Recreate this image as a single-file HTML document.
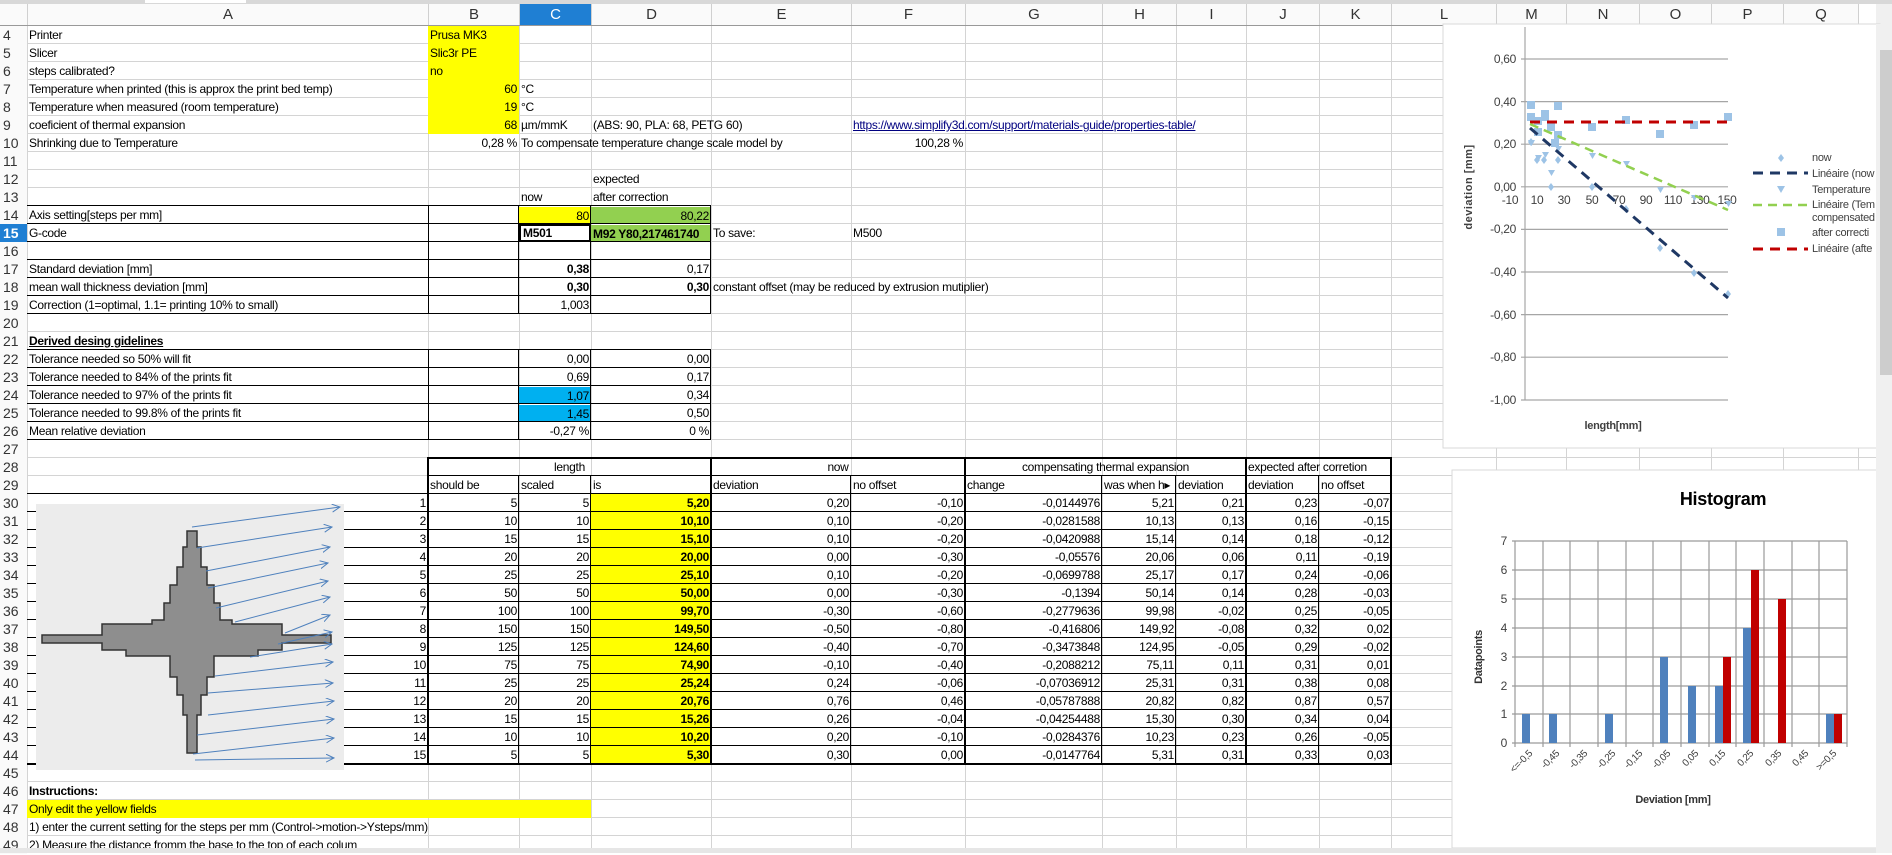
<!DOCTYPE html>
<html><head><meta charset="utf-8"><style>
*{margin:0;padding:0}
body{width:1892px;height:853px;overflow:hidden;background:#fff;position:relative;font-family:"Liberation Sans",Arial,sans-serif;font-size:12px;color:#000;letter-spacing:-0.3px}
#grid{position:absolute;left:27px;top:25px;width:1849px;height:823px;background:repeating-linear-gradient(to bottom,#d4d4d4 0 1px,transparent 1px 18px)}
.v{position:absolute;top:4px;width:1px;height:844px;background:#d4d4d4}
.c{position:absolute;height:18px;line-height:19px;white-space:nowrap;padding:0 2px;box-sizing:border-box}
.r{text-align:right}.ce{text-align:center}.b{font-weight:bold}
.A{left:27px;width:401px}.B{left:428px;width:91px}.C{left:519px;width:72px}.D{left:591px;width:120px}.E{left:711px;width:140px}.F{left:851px;width:114px}.G{left:965px;width:137px}.H{left:1102px;width:74px}.I{left:1176px;width:70px}.J{left:1246px;width:73px}.K{left:1319px;width:72px}
.y{background:#ffff00}.g{background:#92d050}.bl{background:#00b0f0}
.hl{position:absolute;height:1px;background:#000}
.vl{position:absolute;width:1px;background:#000}
.rn{position:absolute;left:0;width:27px;height:18px;line-height:19px;font-size:14px;color:#333;padding-left:3px;box-sizing:border-box;background:#fafafa;letter-spacing:0}
.ch{position:absolute;top:4px;height:21px;line-height:22px;text-align:center;font-size:15px;color:#333;background:#fafafa;border-right:1px solid #d0d0d0;box-sizing:border-box;letter-spacing:0}
</style></head><body>
<div style="position:absolute;left:0;top:0;width:1892px;height:4px;background:#d8d8d8"></div>
<div style="position:absolute;left:145px;top:0;width:101px;height:3px;background:#fff"></div>
<div id="grid"></div>
<div class="v" style="left:27px"></div><div class="v" style="left:428px"></div><div class="v" style="left:519px"></div><div class="v" style="left:591px"></div><div class="v" style="left:711px"></div><div class="v" style="left:851px"></div><div class="v" style="left:965px"></div><div class="v" style="left:1102px"></div><div class="v" style="left:1176px"></div><div class="v" style="left:1246px"></div><div class="v" style="left:1319px"></div><div class="v" style="left:1391px"></div><div class="v" style="left:1496px"></div><div class="v" style="left:1566px"></div><div class="v" style="left:1639px"></div><div class="v" style="left:1711px"></div><div class="v" style="left:1783px"></div><div class="v" style="left:1858px"></div>
<div class="ch" style="left:0;width:28px"></div>
<div class="ch" style="left:28px;width:401px">A</div><div class="ch" style="left:429px;width:91px">B</div><div class="ch" style="left:520px;width:72px;background:#1f7fd3;color:#fff">C</div><div class="ch" style="left:592px;width:120px">D</div><div class="ch" style="left:712px;width:140px">E</div><div class="ch" style="left:852px;width:114px">F</div><div class="ch" style="left:966px;width:137px">G</div><div class="ch" style="left:1103px;width:74px">H</div><div class="ch" style="left:1177px;width:70px">I</div><div class="ch" style="left:1247px;width:73px">J</div><div class="ch" style="left:1320px;width:72px">K</div><div class="ch" style="left:1392px;width:105px">L</div><div class="ch" style="left:1497px;width:70px">M</div><div class="ch" style="left:1567px;width:73px">N</div><div class="ch" style="left:1640px;width:72px">O</div><div class="ch" style="left:1712px;width:72px">P</div><div class="ch" style="left:1784px;width:75px">Q</div>
<div style="position:absolute;left:0;top:25px;width:1876px;height:1px;background:#999"></div>
<div class="rn" style="top:26px">4</div><div class="rn" style="top:44px">5</div><div class="rn" style="top:62px">6</div><div class="rn" style="top:80px">7</div><div class="rn" style="top:98px">8</div><div class="rn" style="top:116px">9</div><div class="rn" style="top:134px">10</div><div class="rn" style="top:152px">11</div><div class="rn" style="top:170px">12</div><div class="rn" style="top:188px">13</div><div class="rn" style="top:206px">14</div><div class="rn" style="top:224px;background:#1f7fd3;color:#fff;font-weight:bold">15</div><div class="rn" style="top:242px">16</div><div class="rn" style="top:260px">17</div><div class="rn" style="top:278px">18</div><div class="rn" style="top:296px">19</div><div class="rn" style="top:314px">20</div><div class="rn" style="top:332px">21</div><div class="rn" style="top:350px">22</div><div class="rn" style="top:368px">23</div><div class="rn" style="top:386px">24</div><div class="rn" style="top:404px">25</div><div class="rn" style="top:422px">26</div><div class="rn" style="top:440px">27</div><div class="rn" style="top:458px">28</div><div class="rn" style="top:476px">29</div><div class="rn" style="top:494px">30</div><div class="rn" style="top:512px">31</div><div class="rn" style="top:530px">32</div><div class="rn" style="top:548px">33</div><div class="rn" style="top:566px">34</div><div class="rn" style="top:584px">35</div><div class="rn" style="top:602px">36</div><div class="rn" style="top:620px">37</div><div class="rn" style="top:638px">38</div><div class="rn" style="top:656px">39</div><div class="rn" style="top:674px">40</div><div class="rn" style="top:692px">41</div><div class="rn" style="top:710px">42</div><div class="rn" style="top:728px">43</div><div class="rn" style="top:746px">44</div><div class="rn" style="top:764px">45</div><div class="rn" style="top:782px">46</div><div class="rn" style="top:800px">47</div><div class="rn" style="top:818px">48</div><div class="rn" style="top:836px">49</div>

<div class="c A" style="top:26px">Printer</div><div class="c B y" style="top:26px">Prusa MK3</div>
<div class="c A" style="top:44px">Slicer</div><div class="c B y" style="top:44px">Slic3r PE</div>
<div class="c A" style="top:62px">steps calibrated?</div><div class="c B y" style="top:62px">no</div>
<div class="c A" style="top:80px">Temperature when printed (this is approx the print bed temp)</div><div class="c B y r" style="top:80px">60</div><div class="c C" style="top:80px">°C</div>
<div class="c A" style="top:98px">Temperature when measured (room temperature)</div><div class="c B y r" style="top:98px">19</div><div class="c C" style="top:98px">°C</div>
<div class="c A" style="top:116px">coeficient of thermal expansion</div><div class="c B y r" style="top:116px">68</div><div class="c C" style="top:116px">µm/mmK</div><div class="c D" style="top:116px">(ABS: 90, PLA: 68, PETG 60)</div><div class="c F" style="top:116px;text-decoration:underline;color:#000080">https://www.simplify3d.com/support/materials-guide/properties-table/</div>
<div class="c A" style="top:134px">Shrinking due to Temperature</div><div class="c B r" style="top:134px">0,28 %</div><div class="c C" style="top:134px">To compensate temperature change scale model by</div><div class="c F r" style="top:134px">100,28 %</div>
<div class="c D" style="top:170px">expected</div>
<div class="c C" style="top:188px">now</div><div class="c D" style="top:188px">after correction</div>
<div class="c A" style="top:206px">Axis setting[steps per mm]</div><div class="c C y r" style="top:207px;height:17px">80</div><div class="c D g r" style="top:207px;height:17px">80,22</div>
<div class="c A" style="top:224px">G-code</div><div class="c C b" style="top:224px;border:2px solid #000;line-height:15px">M501</div><div class="c D g b" style="top:225px;height:17px">M92 Y80,217461740</div><div class="c E" style="top:224px">To save:</div><div class="c F" style="top:224px">M500</div>
<div class="c A" style="top:260px">Standard deviation [mm]</div><div class="c C r b" style="top:260px">0,38</div><div class="c D r" style="top:260px">0,17</div>
<div class="c A" style="top:278px">mean wall thickness deviation [mm]</div><div class="c C r b" style="top:278px">0,30</div><div class="c D r b" style="top:278px">0,30</div><div class="c E" style="top:278px">constant offset (may be reduced by extrusion mutiplier)</div>
<div class="c A" style="top:296px">Correction (1=optimal, 1.1= printing 10% to small)</div><div class="c C r" style="top:296px">1,003</div>
<div class="c A b" style="top:332px;text-decoration:underline">Derived desing gidelines</div>
<div class="c A" style="top:350px">Tolerance needed so 50% will fit</div><div class="c C r" style="top:350px">0,00</div><div class="c D r" style="top:350px">0,00</div>
<div class="c A" style="top:368px">Tolerance needed to 84% of the prints fit</div><div class="c C r" style="top:368px">0,69</div><div class="c D r" style="top:368px">0,17</div>
<div class="c A" style="top:386px">Tolerance needed to 97% of the prints fit</div><div class="c C r bl" style="top:387px;height:17px">1,07</div><div class="c D r" style="top:386px">0,34</div>
<div class="c A" style="top:404px">Tolerance needed to 99.8% of the prints fit</div><div class="c C r bl" style="top:405px;height:17px">1,45</div><div class="c D r" style="top:404px">0,50</div>
<div class="c A" style="top:422px">Mean relative deviation</div><div class="c C r" style="top:422px">-0,27 %</div><div class="c D r" style="top:422px">0 %</div>

<div class="hl" style="left:27px;width:684px;top:205px"></div><div class="hl" style="left:27px;width:684px;top:223px"></div><div class="hl" style="left:27px;width:684px;top:241px"></div><div class="hl" style="left:27px;width:684px;top:259px"></div><div class="hl" style="left:27px;width:684px;top:277px"></div><div class="hl" style="left:27px;width:684px;top:295px"></div><div class="hl" style="left:27px;width:684px;top:313px"></div>
<div class="vl" style="left:428px;top:205px;height:109px"></div><div class="vl" style="left:518px;top:205px;height:109px"></div><div class="vl" style="left:590px;top:205px;height:109px"></div><div class="vl" style="left:710px;top:205px;height:109px"></div>
<div class="hl" style="left:27px;width:684px;top:349px"></div><div class="hl" style="left:27px;width:684px;top:367px"></div><div class="hl" style="left:27px;width:684px;top:385px"></div><div class="hl" style="left:27px;width:684px;top:403px"></div><div class="hl" style="left:27px;width:684px;top:421px"></div><div class="hl" style="left:27px;width:684px;top:439px"></div>
<div class="vl" style="left:428px;top:349px;height:91px"></div><div class="vl" style="left:518px;top:349px;height:91px"></div><div class="vl" style="left:590px;top:349px;height:91px"></div><div class="vl" style="left:710px;top:349px;height:91px"></div>

<div class="c D y" style="top:494px;height:270px;padding:0"></div>
<div class="c ce" style="left:428px;width:283px;top:458px">length</div><div class="c ce" style="left:711px;width:254px;top:458px">now</div><div class="c ce" style="left:965px;width:281px;top:458px">compensating thermal expansion</div><div class="c" style="left:1246px;width:145px;top:458px">expected after corretion</div>
<div class="c B" style="top:476px">should be</div><div class="c C" style="top:476px">scaled</div><div class="c D" style="top:476px">is</div><div class="c E" style="top:476px">deviation</div><div class="c F" style="top:476px">no offset</div><div class="c G" style="top:476px">change</div><div class="c H" style="top:476px;overflow:hidden">was when h▸</div><div class="c I" style="top:476px">deviation</div><div class="c J" style="top:476px">deviation</div><div class="c K" style="top:476px">no offset</div>
<div id="rows"></div>
<div class="hl" style="left:428px;width:964px;top:457px;height:2px"></div>
<div class="hl" style="left:428px;width:964px;top:475px"></div>
<div class="hl" style="left:27px;width:1365px;top:493px"></div><div class="hl" style="left:27px;width:1365px;top:511px"></div><div class="hl" style="left:27px;width:1365px;top:529px"></div><div class="hl" style="left:27px;width:1365px;top:547px"></div><div class="hl" style="left:27px;width:1365px;top:565px"></div><div class="hl" style="left:27px;width:1365px;top:583px"></div><div class="hl" style="left:27px;width:1365px;top:601px"></div><div class="hl" style="left:27px;width:1365px;top:619px"></div><div class="hl" style="left:27px;width:1365px;top:637px"></div><div class="hl" style="left:27px;width:1365px;top:655px"></div><div class="hl" style="left:27px;width:1365px;top:673px"></div><div class="hl" style="left:27px;width:1365px;top:691px"></div><div class="hl" style="left:27px;width:1365px;top:709px"></div><div class="hl" style="left:27px;width:1365px;top:727px"></div><div class="hl" style="left:27px;width:1365px;top:745px"></div>
<div class="hl" style="left:27px;width:1365px;top:763px;height:2px"></div>
<div class="vl" style="left:427px;top:457px;height:308px;width:2px"></div>
<div class="vl" style="left:518px;top:476px;height:288px"></div><div class="vl" style="left:590px;top:476px;height:288px"></div>
<div class="vl" style="left:710px;top:457px;height:308px;width:2px"></div>
<div class="vl" style="left:850px;top:476px;height:288px"></div>
<div class="vl" style="left:964px;top:457px;height:308px;width:2px"></div>
<div class="vl" style="left:1101px;top:476px;height:288px"></div><div class="vl" style="left:1175px;top:476px;height:288px"></div>
<div class="vl" style="left:1245px;top:457px;height:308px;width:2px"></div>
<div class="vl" style="left:1318px;top:476px;height:288px"></div>
<div class="vl" style="left:1390px;top:457px;height:308px;width:2px"></div>

<div class="c A b" style="top:782px">Instructions:</div>
<div class="c y" style="left:27px;width:564px;top:800px">Only edit the yellow fields</div>
<div class="c A" style="top:818px">1) enter the current setting for the steps per mm (Control-&gt;motion-&gt;Ysteps/mm)</div>
<div class="c A" style="top:836px">2) Measure the distance fromm the base to the top of each colum</div>

<div style="position:absolute;left:0;top:848px;width:1892px;height:5px;background:#e6e6e6"></div>
<div style="position:absolute;left:1876px;top:4px;width:16px;height:849px;background:#f0f0f0"></div>
<div style="position:absolute;left:1880px;top:50px;width:12px;height:325px;background:#cdcdcd"></div>

<script>
var d=[[1,5,5,"5,20","0,20","-0,10","-0,0144976","5,21","0,21","0,23","-0,07"],
[2,10,10,"10,10","0,10","-0,20","-0,0281588","10,13","0,13","0,16","-0,15"],
[3,15,15,"15,10","0,10","-0,20","-0,0420988","15,14","0,14","0,18","-0,12"],
[4,20,20,"20,00","0,00","-0,30","-0,05576","20,06","0,06","0,11","-0,19"],
[5,25,25,"25,10","0,10","-0,20","-0,0699788","25,17","0,17","0,24","-0,06"],
[6,50,50,"50,00","0,00","-0,30","-0,1394","50,14","0,14","0,28","-0,03"],
[7,100,100,"99,70","-0,30","-0,60","-0,2779636","99,98","-0,02","0,25","-0,05"],
[8,150,150,"149,50","-0,50","-0,80","-0,416806","149,92","-0,08","0,32","0,02"],
[9,125,125,"124,60","-0,40","-0,70","-0,3473848","124,95","-0,05","0,29","-0,02"],
[10,75,75,"74,90","-0,10","-0,40","-0,2088212","75,11","0,11","0,31","0,01"],
[11,25,25,"25,24","0,24","-0,06","-0,07036912","25,31","0,31","0,38","0,08"],
[12,20,20,"20,76","0,76","0,46","-0,05787888","20,82","0,82","0,87","0,57"],
[13,15,15,"15,26","0,26","-0,04","-0,04254488","15,30","0,30","0,34","0,04"],
[14,10,10,"10,20","0,20","-0,10","-0,0284376","10,23","0,23","0,26","-0,05"],
[15,5,5,"5,30","0,30","0,00","-0,0147764","5,31","0,31","0,33","0,03"]];
var cols=["A","B","C","D","E","F","G","H","I","J","K"],h="";
d.forEach(function(r,i){var t=494+i*18;r.forEach(function(v,j){
var st="top:"+t+"px";if(j==0)st+=";left:300px;width:128px";
h+='<div class="c r'+(j==3?' b':'')+(j==0?'':' '+cols[j])+'" style="'+st+'">'+v+'</div>';});});
document.getElementById("rows").innerHTML=h;
</script>

<svg width="1892" height="853" style="position:absolute;left:0;top:0" font-family="Liberation Sans, Arial, sans-serif">
<defs><marker id="ah" markerWidth="9" markerHeight="9" refX="8" refY="4" orient="auto" markerUnits="userSpaceOnUse"><path d="M0,0 L8,4 L0,8" fill="none" stroke="#4f81bd" stroke-width="1"/></marker></defs>
<rect x="36" y="504" width="308" height="266" fill="#ececec"/>
<polygon points="187,531 197,531 197,547 201,547 201,567 207,567 207,585 214,585 214,603 220,603 220,620 232,620 232,624 282,624 282,635 331,635 331,643 282,643 282,650 258,650 258,656 214,656 214,677 207,677 207,695 201,695 201,715 197,715 197,753 187,753 187,715 183,715 183,695 177,695 177,677 170,677 170,656 126,656 126,650 102,650 102,643 42,643 42,635 102,635 102,624 152,624 152,620 164,620 164,603 170,603 170,585 177,585 177,567 183,567 183,547 187,547" fill="#8e8e8e" stroke="#333" stroke-width="1.5"/>
<g stroke="#4f81bd" stroke-width="1" marker-end="url(#ah)">
<line x1="192" y1="527" x2="340" y2="507"/><line x1="197" y1="548" x2="332" y2="527"/><line x1="206" y1="571" x2="330" y2="547"/><line x1="208" y1="588" x2="328" y2="563"/><line x1="216" y1="608" x2="328" y2="581"/><line x1="235" y1="622" x2="330" y2="597"/><line x1="285" y1="633" x2="330" y2="615"/><line x1="278" y1="644" x2="332" y2="632"/><line x1="250" y1="657" x2="332" y2="644"/><line x1="215" y1="676" x2="333" y2="662"/><line x1="208" y1="693" x2="333" y2="683"/><line x1="208" y1="715" x2="334" y2="701"/><line x1="197" y1="735" x2="334" y2="719"/><line x1="193" y1="754" x2="334" y2="738"/><line x1="195" y1="760" x2="334" y2="758"/>
</g>
<rect x="1443" y="24" width="437" height="424" fill="#fff" stroke="#d9d9d9"/>
<g stroke="#a6a6a6" stroke-width="1.2">
<line x1="1521" y1="59" x2="1728" y2="59"/><line x1="1521" y1="101.6" x2="1728" y2="101.6"/><line x1="1521" y1="144.2" x2="1728" y2="144.2"/><line x1="1521" y1="186.8" x2="1728" y2="186.8"/><line x1="1521" y1="229.4" x2="1728" y2="229.4"/><line x1="1521" y1="272" x2="1728" y2="272"/><line x1="1521" y1="314.6" x2="1728" y2="314.6"/><line x1="1521" y1="357.2" x2="1728" y2="357.2"/><line x1="1521" y1="400" x2="1728" y2="400"/>
<line x1="1525" y1="27" x2="1525" y2="400"/>
</g>
<g font-size="12" fill="#404040" text-anchor="end">
<text x="1516" y="63">0,60</text><text x="1516" y="106">0,40</text><text x="1516" y="148">0,20</text><text x="1516" y="191">0,00</text><text x="1516" y="233">-0,20</text><text x="1516" y="276">-0,40</text><text x="1516" y="319">-0,60</text><text x="1516" y="361">-0,80</text><text x="1516" y="404">-1,00</text>
</g>
<g font-size="12" fill="#404040" text-anchor="middle">
<text x="1510" y="204">-10</text><text x="1537" y="204">10</text><text x="1564" y="204">30</text><text x="1592" y="204">50</text><text x="1619" y="204">70</text><text x="1646" y="204">90</text><text x="1673" y="204">110</text><text x="1700" y="204">130</text><text x="1727" y="204">150</text>
</g>
<g fill="#9dc3e6">
<rect x="1527" y="101" width="8" height="8"/><rect x="1534" y="117" width="8" height="8"/><rect x="1541" y="113" width="8" height="8"/><rect x="1547" y="123" width="8" height="8"/><rect x="1554" y="131" width="8" height="8"/><rect x="1588" y="123" width="8" height="8"/><rect x="1656" y="130" width="8" height="8"/><rect x="1724" y="113" width="8" height="8"/><rect x="1690" y="121" width="8" height="8"/><rect x="1622" y="116" width="8" height="8"/><rect x="1554" y="102" width="8" height="8"/><rect x="1541" y="110" width="8" height="8"/><rect x="1527" y="113" width="8" height="8"/><rect x="1534" y="128" width="8" height="8"/><rect x="1551" y="139" width="8" height="8"/>
<path d="M1531,138 l3,4 -3,4 -3,-4z M1537,156 l3,4 -3,4 -3,-4z M1544,156 l3,4 -3,4 -3,-4z M1551,183 l3,4 -3,4 -3,-4z M1558,156 l3,4 -3,4 -3,-4z M1592,183 l3,4 -3,4 -3,-4z M1660,244 l3,4 -3,4 -3,-4z M1728,290 l3,4 -3,4 -3,-4z M1694,269 l3,4 -3,4 -3,-4z M1626,205 l3,4 -3,4 -3,-4z"/>
<path d="M1528,140 h7 l-3.5,6z M1535,155 h7 l-3.5,6z M1542,152 h7 l-3.5,6z M1548,170 h7 l-3.5,6z M1555,146 h7 l-3.5,6z M1589,153 h7 l-3.5,6z M1657,187 h7 l-3.5,6z M1725,201 h7 l-3.5,6z M1691,195 h7 l-3.5,6z M1623,161 h7 l-3.5,6z"/>
</g>
<line x1="1530" y1="122" x2="1728" y2="122" stroke="#c00000" stroke-width="3" stroke-dasharray="10,7"/>
<line x1="1530" y1="124" x2="1728" y2="210" stroke="#92d050" stroke-width="2.5" stroke-dasharray="9,6"/>
<line x1="1530" y1="128" x2="1728" y2="298" stroke="#1f3864" stroke-width="3" stroke-dasharray="10,7"/>
<text transform="translate(1472,187) rotate(-90)" font-size="11" font-weight="bold" text-anchor="middle" fill="#404040" letter-spacing="0.5">deviation [mm]</text>
<text x="1613" y="429" font-size="11" font-weight="bold" text-anchor="middle" fill="#404040">length[mm]</text>
<g font-size="11" fill="#404040">
<path d="M1781,154 l3,4 -3,4 -3,-4z" fill="#9dc3e6"/><text x="1812" y="161">now</text>
<line x1="1753" y1="173" x2="1808" y2="173" stroke="#1f3864" stroke-width="3" stroke-dasharray="10,7"/><text x="1812" y="177">Linéaire (now</text>
<path d="M1777,186 h8 l-4,7z" fill="#9dc3e6"/><text x="1812" y="193">Temperature</text>
<line x1="1753" y1="205" x2="1808" y2="205" stroke="#92d050" stroke-width="2.5" stroke-dasharray="9,6"/><text x="1812" y="208">Linéaire (Tem</text><text x="1812" y="221">compensated</text>
<rect x="1777" y="228" width="8" height="8" fill="#9dc3e6"/><text x="1812" y="236">after correcti</text>
<line x1="1753" y1="249" x2="1808" y2="249" stroke="#c00000" stroke-width="3" stroke-dasharray="10,7"/><text x="1812" y="252">Linéaire (afte</text>
</g>
<rect x="1876" y="24" width="16" height="430" fill="#f0f0f0"/><rect x="1880" y="50" width="12" height="325" fill="#cdcdcd"/>
<rect x="1452" y="470" width="430" height="378" fill="#fff" stroke="#d9d9d9"/>
<text x="1723" y="505" font-size="18" font-weight="bold" text-anchor="middle">Histogram</text>
<g stroke="#9a9a9a" stroke-width="1.2">
<line x1="1512" y1="743" x2="1847" y2="743"/><line x1="1512" y1="714" x2="1847" y2="714"/><line x1="1512" y1="686" x2="1847" y2="686"/><line x1="1512" y1="657" x2="1847" y2="657"/><line x1="1512" y1="628" x2="1847" y2="628"/><line x1="1512" y1="599" x2="1847" y2="599"/><line x1="1512" y1="570" x2="1847" y2="570"/><line x1="1512" y1="541" x2="1847" y2="541"/>
<line x1="1515" y1="541" x2="1515" y2="747"/><line x1="1543" y1="541" x2="1543" y2="747"/><line x1="1570" y1="541" x2="1570" y2="747"/><line x1="1598" y1="541" x2="1598" y2="747"/><line x1="1626" y1="541" x2="1626" y2="747"/><line x1="1653" y1="541" x2="1653" y2="747"/><line x1="1681" y1="541" x2="1681" y2="747"/><line x1="1709" y1="541" x2="1709" y2="747"/><line x1="1736" y1="541" x2="1736" y2="747"/><line x1="1764" y1="541" x2="1764" y2="747"/><line x1="1792" y1="541" x2="1792" y2="747"/><line x1="1819" y1="541" x2="1819" y2="747"/><line x1="1847" y1="541" x2="1847" y2="747"/>
</g>
<g font-size="12" fill="#404040" text-anchor="end">
<text x="1507" y="747">0</text><text x="1507" y="718">1</text><text x="1507" y="690">2</text><text x="1507" y="661">3</text><text x="1507" y="632">4</text><text x="1507" y="603">5</text><text x="1507" y="574">6</text><text x="1507" y="545">7</text>
</g>
<g fill="#4f81bd">
<rect x="1522" y="714" width="8" height="29"/><rect x="1549" y="714" width="8" height="29"/><rect x="1605" y="714" width="8" height="29"/><rect x="1660" y="657" width="8" height="86"/><rect x="1688" y="686" width="8" height="57"/><rect x="1715" y="686" width="8" height="57"/><rect x="1743" y="628" width="8" height="115"/><rect x="1826" y="714" width="8" height="29"/>
</g>
<g fill="#c00000">
<rect x="1723" y="657" width="8" height="86"/><rect x="1751" y="570" width="8" height="173"/><rect x="1778" y="599" width="8" height="144"/><rect x="1834" y="714" width="8" height="29"/>
</g>
<g font-size="10" fill="#404040" text-anchor="end">
<text transform="translate(1533,754) rotate(-45)">&lt;=-0,5</text><text transform="translate(1560,754) rotate(-45)">-0,45</text><text transform="translate(1588,754) rotate(-45)">-0,35</text><text transform="translate(1616,754) rotate(-45)">-0,25</text><text transform="translate(1643,754) rotate(-45)">-0,15</text><text transform="translate(1671,754) rotate(-45)">-0,05</text><text transform="translate(1699,754) rotate(-45)">0,05</text><text transform="translate(1726,754) rotate(-45)">0,15</text><text transform="translate(1754,754) rotate(-45)">0,25</text><text transform="translate(1782,754) rotate(-45)">0,35</text><text transform="translate(1809,754) rotate(-45)">0,45</text><text transform="translate(1837,754) rotate(-45)">&gt;=0,5</text>
</g>
<text x="1673" y="803" font-size="11" font-weight="bold" text-anchor="middle" fill="#333">Deviation [mm]</text>
<text transform="translate(1482,657) rotate(-90)" font-size="11" font-weight="bold" text-anchor="middle" fill="#333">Datapoints</text>
<rect x="1876" y="454" width="16" height="399" fill="#f0f0f0"/>
<rect x="0" y="848" width="1876" height="5" fill="#e6e6e6"/>
</svg>
</body></html>
